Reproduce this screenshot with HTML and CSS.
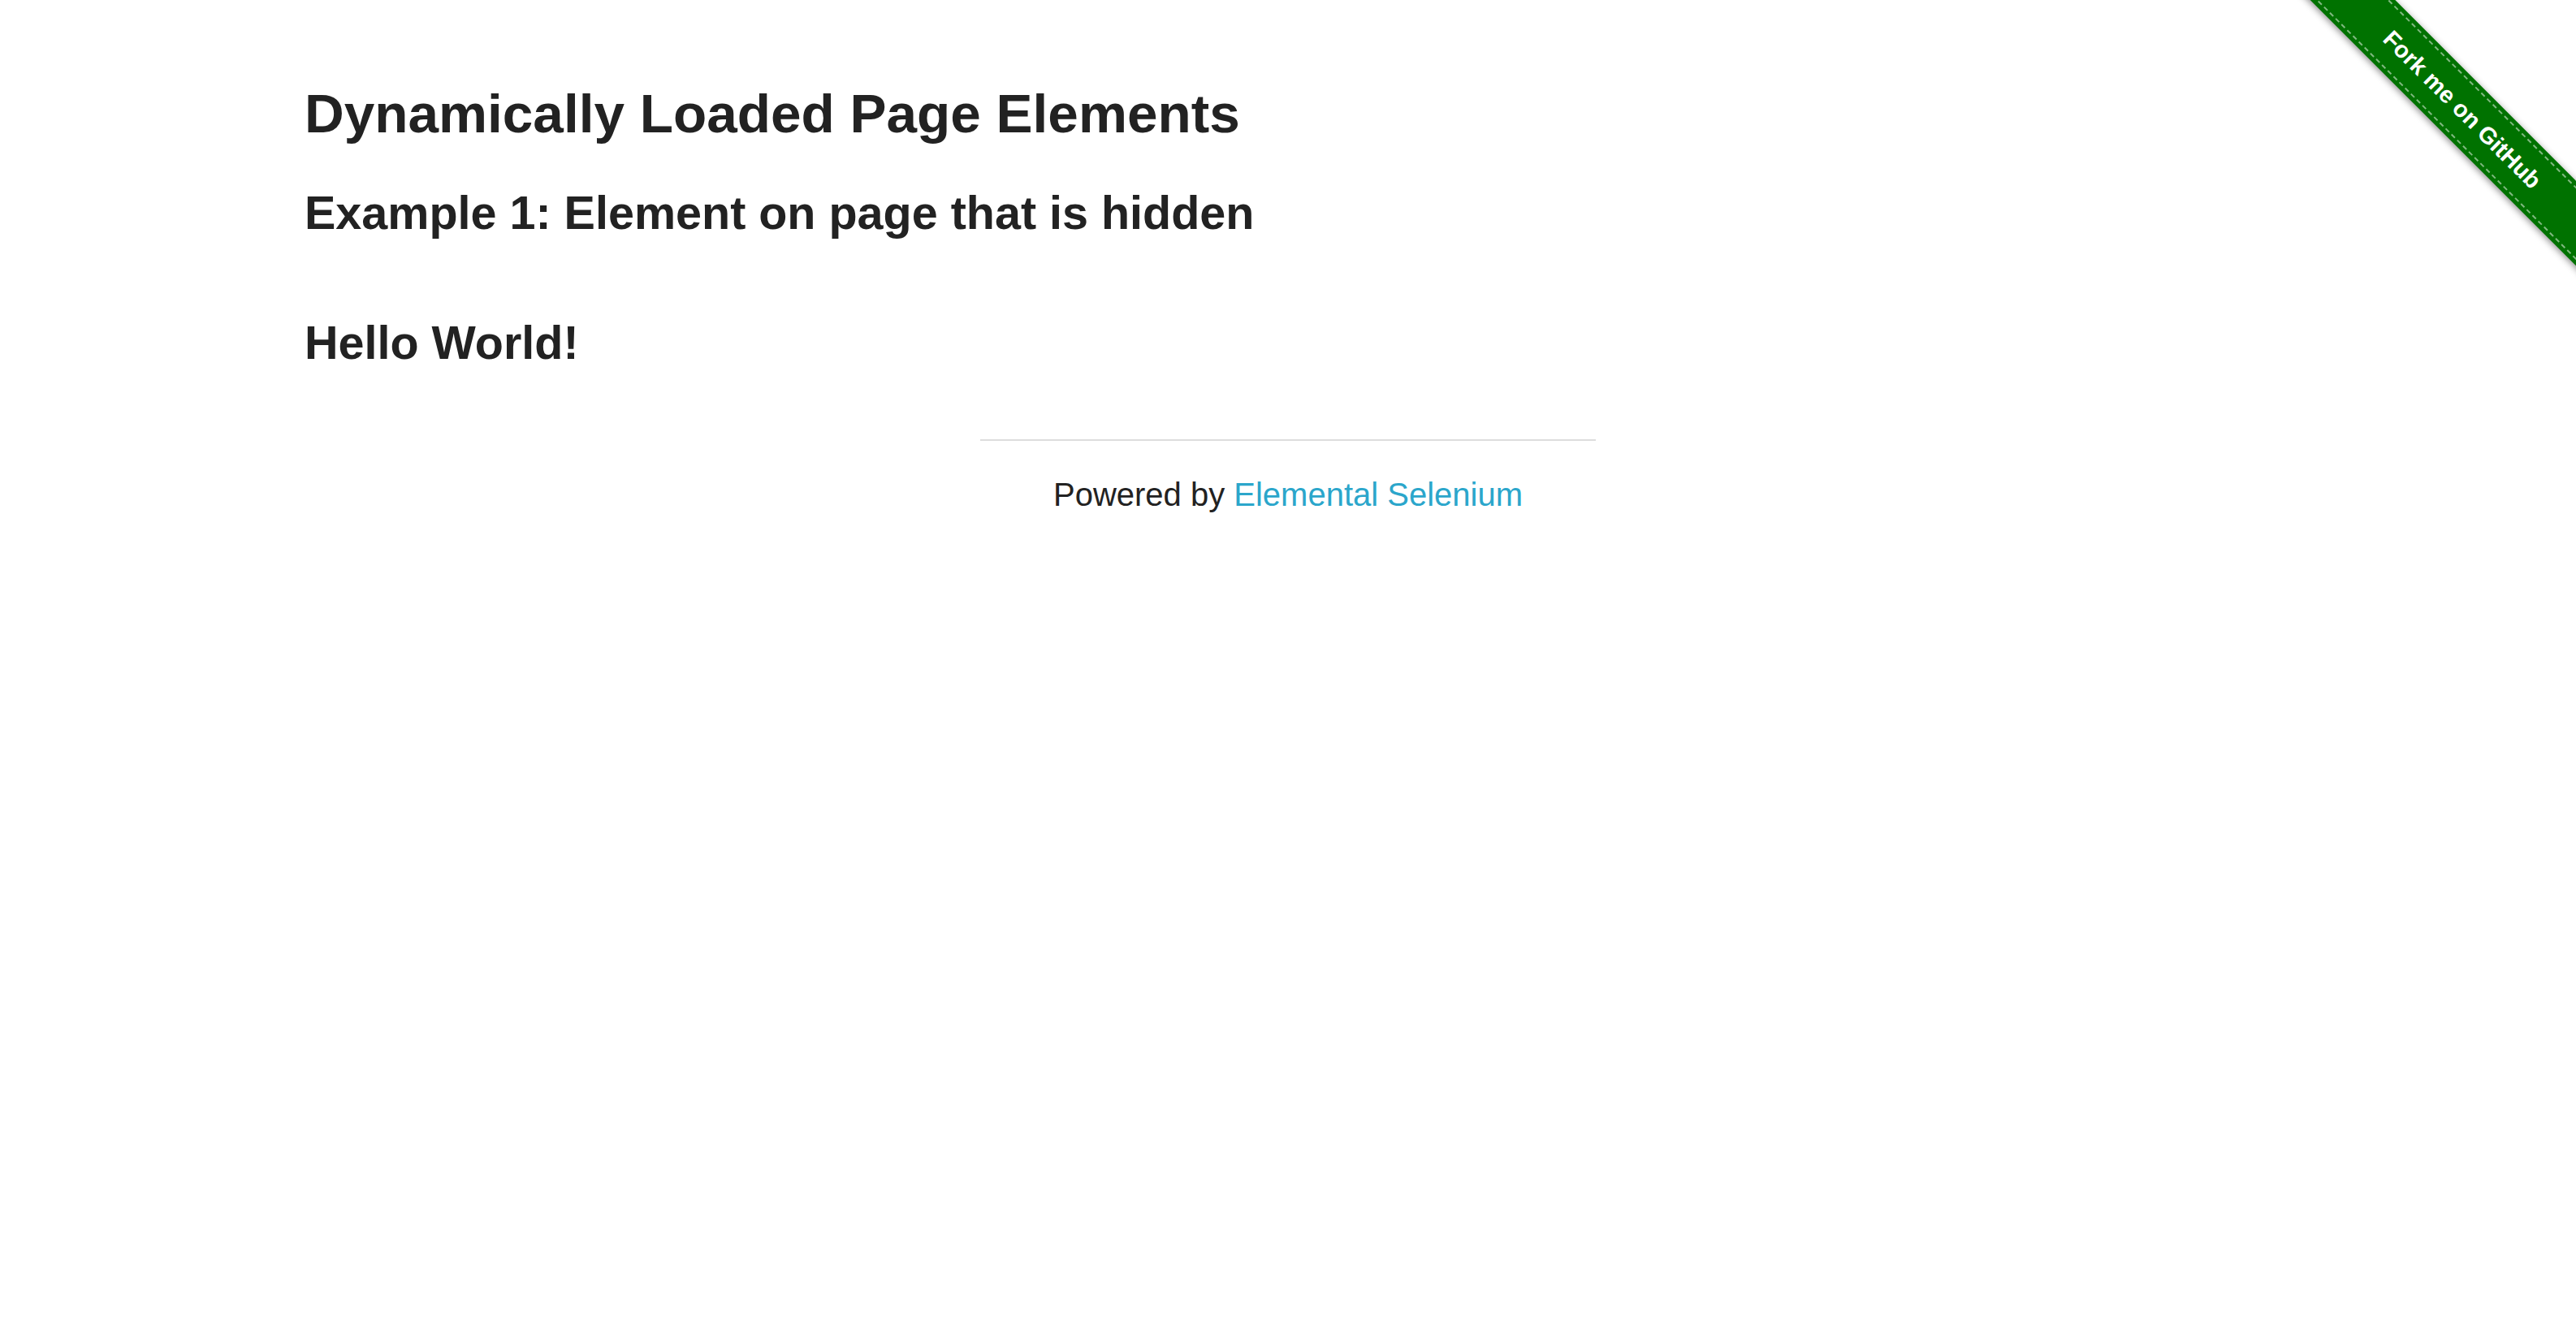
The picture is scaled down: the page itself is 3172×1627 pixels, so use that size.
FILE: index.html
```html
<!DOCTYPE html>
<html lang="en">
<head>
<meta charset="utf-8">
<title>The Internet</title>
<link rel="stylesheet" href="styles.css">
</head>
<body>
<div class="ribbon"><a class="ribbon-band" href="#">Fork me on GitHub</a></div>
<div class="page">
  <div class="content">
    <h3 class="title">Dynamically Loaded Page Elements</h3>
    <h4 class="subtitle">Example 1: Element on page that is hidden</h4>
    <div class="finish"><h4 class="hello">Hello World!</h4></div>
  </div>
  <div class="footer">
    <hr class="rule">
    <div class="powered">Powered by <a class="link" href="#">Elemental Selenium</a></div>
  </div>
</div>
</body>
</html>
```

FILE: styles.css
```css
html, body {
  margin: 0;
  padding: 0;
  background: #ffffff;
  overflow-x: hidden;
}
body {
  font-family: "Liberation Sans", Arial, Helvetica, sans-serif;
  color: #222222;
}
.page {
  display: flex;
  flex-direction: column;
}
.content {
  padding: 100px 0 0 375px;
  display: flex;
  flex-direction: column;
}
.title {
  margin: 0;
  font-size: 67.5px;
  line-height: 80px;
  font-weight: bold;
}
.subtitle {
  margin: 47px 0 0 0;
  font-size: 57.5px;
  line-height: 70px;
  font-weight: bold;
}
.finish {
  margin-top: 91px;
}
.hello {
  margin: 0;
  font-size: 57.5px;
  line-height: 68px;
  font-weight: bold;
}
.footer {
  display: flex;
  flex-direction: column;
  align-items: center;
  margin-top: 85px;
}
.rule {
  width: 758px;
  margin: 0;
  border: 0;
  height: 2px;
  background: #dddddd;
}
.powered {
  margin-top: 42px;
  font-size: 40px;
  line-height: 48px;
  text-align: center;
}
.link {
  color: #2ba6cb;
  text-decoration: none;
}
.ribbon {
  position: absolute;
  top: 0;
  right: 0;
  width: 360px;
  height: 360px;
  overflow: hidden;
}
.ribbon-band {
  position: absolute;
  left: -30px;
  top: 98px;
  width: 500px;
  height: 74px;
  background: #007200;
  color: #ffffff;
  text-decoration: none;
  font-family: "Liberation Sans", Arial, sans-serif;
  font-weight: bold;
  font-size: 29px;
  display: flex;
  align-items: center;
  justify-content: center;
  transform: rotate(45deg);
  box-shadow: 0 2px 8px rgba(0, 0, 0, 0.45);
}
.ribbon-band::before {
  content: "";
  position: absolute;
  left: 0;
  right: 0;
  top: 5px;
  bottom: 5px;
  border-top: 2px dashed rgba(255, 255, 255, 0.5);
  border-bottom: 2px dashed rgba(255, 255, 255, 0.5);
}
```
